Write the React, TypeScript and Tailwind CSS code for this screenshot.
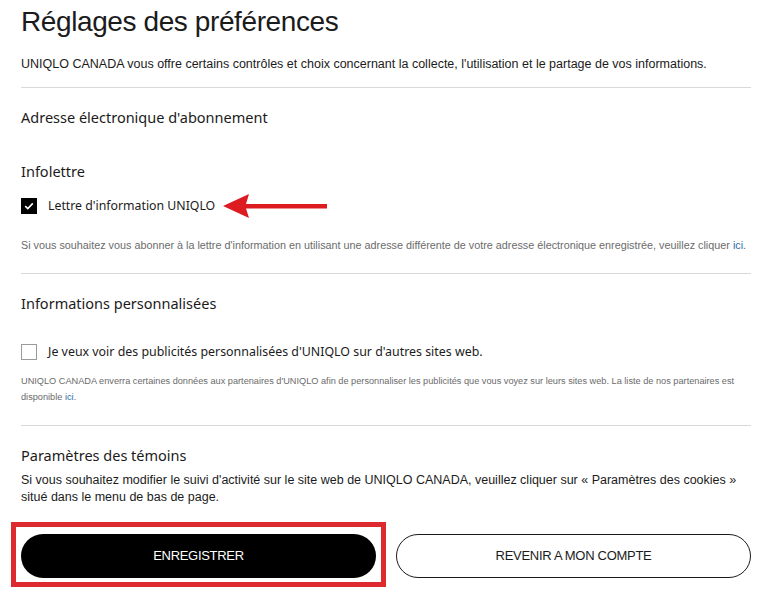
import React from "react";

const arial = { fontFamily: '"Liberation Sans", Arial, sans-serif' };
const segoe = { fontFamily: '"Noto Sans", "Open Sans", sans-serif' };

function Divider() {
  return <div className="h-px bg-[#d9d9d9] w-[730px]" />;
}

function Arrow() {
  return (
    <svg width="104" height="26" viewBox="0 0 104 26" className="ml-[8px]">
      <path d="M0 13 L26 1 L23 11 L104 11 L104 15.5 L23 15.5 L26 25 Z" fill="#dd1c22" />
    </svg>
  );
}

export default function App() {
  return (
    <div className="w-[772px] h-[602px] bg-white text-[#1b1b1b] overflow-hidden pl-[21px]" style={arial}>
      <h1 className="text-[28px] leading-[33px] pt-[5px] tracking-[-0.4px]">Réglages des préférences</h1>
      <p className="text-[12.5px] mt-[18px] leading-[16px]">
        UNIQLO CANADA vous offre certains contrôles et choix concernant la collecte, l'utilisation et le partage de vos informations.
      </p>
      <div className="mt-[15px]">
        <Divider />
      </div>

      <h2 className="text-[14.5px] leading-[20px] mt-[19px]" style={segoe}>Adresse électronique d'abonnement</h2>

      <h2 className="text-[14.5px] leading-[20px] mt-[34px]" style={segoe}>Infolettre</h2>
      <div className="flex items-center mt-[17px] h-[16px]">
        <span className="w-[16px] h-[16px] bg-black flex items-center justify-center">
          <svg width="10" height="8" viewBox="0 0 10 8">
            <path d="M1.2 4.2 L3.8 6.6 L8.8 1.4" stroke="white" strokeWidth="1.6" fill="none" />
          </svg>
        </span>
        <span className="ml-[11px] text-[12.3px]" style={segoe}>Lettre d'information UNIQLO</span>
        <Arrow />
      </div>
      <p className="text-[10.8px] text-[#6b6b6b] mt-[24px] leading-[14px]">
        Si vous souhaitez vous abonner à la lettre d'information en utilisant une adresse différente de votre adresse électronique enregistrée, veuillez cliquer{" "}
        <span className="text-[#2f6ea8]">ici</span>.
      </p>
      <div className="mt-[21px]">
        <Divider />
      </div>

      <h2 className="text-[14.5px] leading-[20px] mt-[19px]" style={segoe}>Informations personnalisées</h2>
      <div className="flex items-center mt-[31px] h-[16px]">
        <span className="w-[16px] h-[16px] border border-[#9a9a9a] bg-white" />
        <span className="ml-[11px] text-[12.4px]" style={segoe}>Je veux voir des publicités personnalisées d'UNIQLO sur d'autres sites web.</span>
      </div>
      <p className="text-[9.2px] text-[#6b6b6b] mt-[13px] leading-[16px] w-[730px]">
        UNIQLO CANADA enverra certaines données aux partenaires d'UNIQLO afin de personnaliser les publicités que vous voyez sur leurs sites web. La liste de nos partenaires est disponible{" "}
        <span className="text-[#2f6ea8]">ici</span>.
      </p>
      <div className="mt-[20px]">
        <Divider />
      </div>

      <h2 className="text-[14.5px] leading-[20px] mt-[19px]" style={segoe}>Paramètres des témoins</h2>
      <p className="text-[12.5px] leading-[17px] mt-[7px] w-[730px]">
        Si vous souhaitez modifier le suivi d'activité sur le site web de UNIQLO CANADA, veuillez cliquer sur « Paramètres des cookies » situé dans le menu de bas de page.
      </p>

      <div className="flex items-start mt-[16px] -ml-[10px]">
        <div className="border-[5px] border-[#dc2a2f] pt-[7px] pb-[4px] px-[5px]">
          <button className="w-[355px] h-[44px] rounded-full bg-black text-white text-[13px] tracking-[-0.3px]" style={arial}>
            ENREGISTRER
          </button>
        </div>
        <button className="ml-[10px] mt-[12px] w-[355px] h-[44px] rounded-full border border-[#1b1b1b] bg-white text-[#1b1b1b] text-[13px] tracking-[-0.3px]" style={arial}>
          REVENIR A MON COMPTE
        </button>
      </div>
    </div>
  );
}
